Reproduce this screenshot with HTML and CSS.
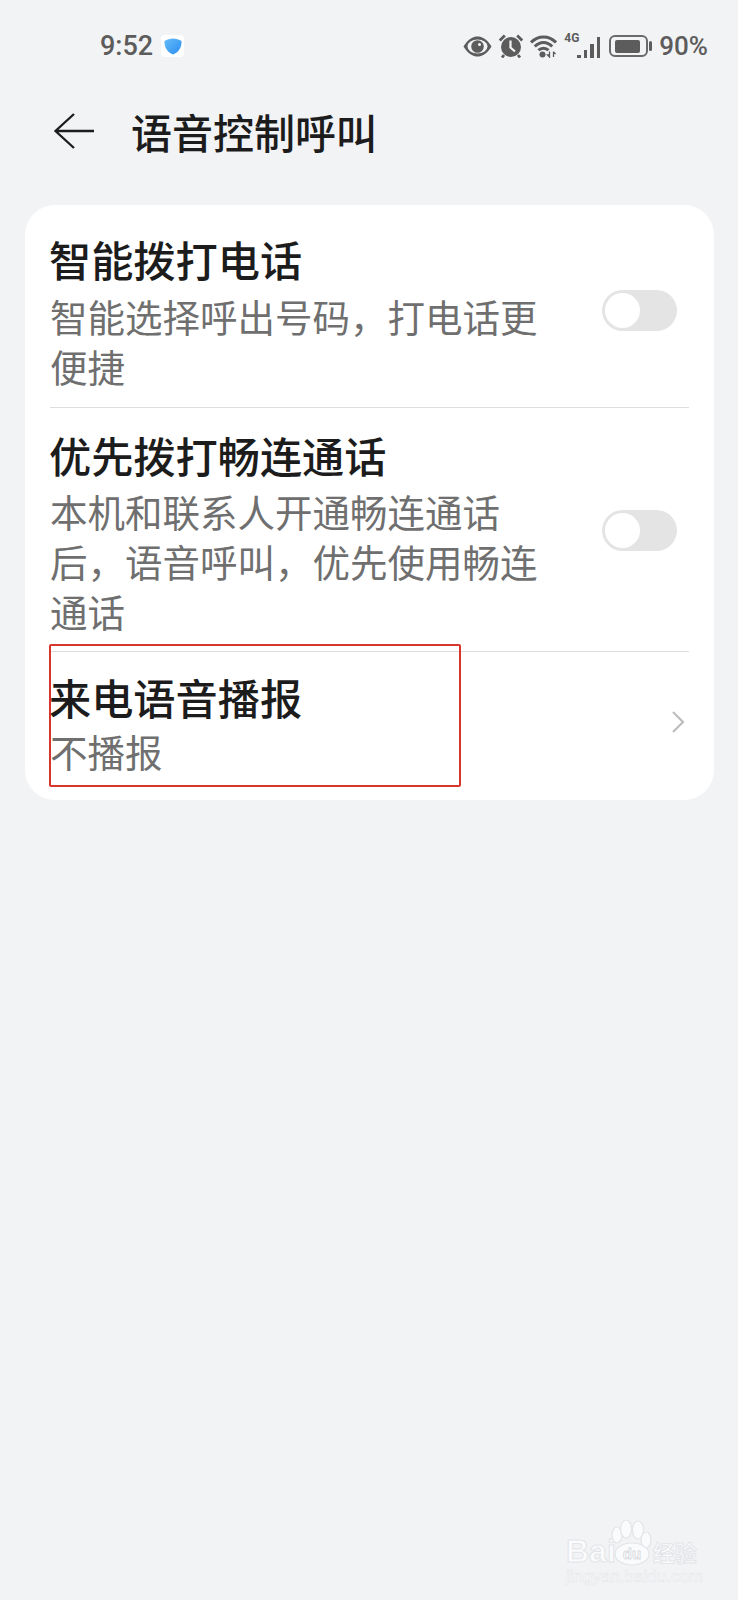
FILE: index.html
```html
<!DOCTYPE html>
<html lang="zh-CN">
<head>
<meta charset="UTF-8" />
<title>语音控制呼叫</title>
<link rel="stylesheet" href="styles.css">
</head>
<body>

<div class="statusbar">
	<div class="status-left">
		<span class="time">9:52</span>
		<span class="shieldbox">
			<svg width="18" height="17" viewBox="0 0 18 17"><defs><linearGradient id="sh" x1="0" y1="0" x2="1" y2="1"><stop offset="0" stop-color="#66bdf8"/><stop offset="1" stop-color="#2a8cf0"/></linearGradient></defs><path d="M9 0.500 C12 0.500 15 1.500 17.500 3 C18 9 14.500 14.500 9 16.500 C3.500 14.500 0 9 0.500 3 C3 1.500 6 0.500 9 0.500 Z" fill="url(#sh)"/></svg>
		</span>
	</div>
	<div class="status-right">
		<svg class="ico-eye" width="29" height="21" viewBox="0 0 29 21"><path d="M0.500 10.500 C5 3 10 0.500 14.500 0.500 C19 0.500 24 3 28.500 10.500 C24 18 19 20.500 14.500 20.500 C10 20.500 5 18 0.500 10.500 Z" fill="#5c5c5c"/><ellipse cx="14.500" cy="10.500" rx="10" ry="7" fill="#f2f3f5"/><circle cx="14.500" cy="10.500" r="6.300" fill="#5c5c5c"/><circle cx="16.500" cy="8.500" r="1.500" fill="#f2f3f5"/></svg>
		<svg class="ico-alarm" width="24" height="24" viewBox="0 0 24 24"><circle cx="12" cy="13" r="10" fill="#5c5c5c"/><path d="M11.500 6.500 V13.500 L16 17.500" fill="none" stroke="#f2f3f5" stroke-width="2.200"/><path d="M0.800 6.500 L5.800 1.500 M23.200 6.500 L18.200 1.500 M5 21 L3 23.500 M19 21 L21 23.500" stroke="#5c5c5c" stroke-width="2.800" fill="none"/></svg>
		<svg class="ico-wifi" width="27" height="24" viewBox="0 0 27 24"><path d="M1 8.500 C8 1 19 1 26 8.500 M4.800 12.500 C10 7 17 7 22.200 12.500 M8.500 16.300 C11 13.500 16 13.500 18.500 16.300" fill="none" stroke="#5c5c5c" stroke-width="3"/><circle cx="12.500" cy="20.500" r="3" fill="#5c5c5c"/><path d="M19.500 17.500 V23 L17.500 21 H19.500 M23.500 17.500 V23 M23.500 18 L25.500 20" fill="none" stroke="#5c5c5c" stroke-width="1.300"/></svg>
		<div class="signal">
			<span class="net">4G</span>
			<div class="bars">
				<i class="bar b1"></i><i class="bar b2"></i><i class="bar b3"></i><i class="bar b4"></i>
			</div>
		</div>
		<div class="battery">
			<div class="battery-body"><div class="battery-fill"></div></div>
			<div class="battery-tip"></div>
		</div>
		<span class="percent">90%</span>
	</div>
</div>

<div class="topbar">
	<svg class="back" width="42" height="38" viewBox="0 0 42 38"><path d="M21 2 L2.500 19 L21 36 M2.500 19 H41" fill="none" stroke="#1c1c1c" stroke-width="2.300"/></svg>
	<h1>语音控制呼叫</h1>
</div>

<div class="card">
	<div class="row row-first">
		<div class="row-text">
			<div class="row-title">智能拨打电话</div>
			<div class="row-sub">智能选择呼出号码，打电话更便捷</div>
		</div>
		<div class="toggle"><div class="knob"></div></div>
	</div>
	<div class="row">
		<div class="row-text">
			<div class="row-title">优先拨打畅连通话</div>
			<div class="row-sub">本机和联系人开通畅连通话后，语音呼叫，优先使用畅连通话</div>
		</div>
		<div class="toggle"><div class="knob"></div></div>
	</div>
	<div class="row row-last">
		<div class="row-text">
			<div class="row-title">来电语音播报</div>
			<div class="row-sub">不播报</div>
		</div>
		<svg class="chevron" width="14" height="24" viewBox="0 0 14 24"><path d="M2 2 L12 12 L2 22" fill="none" stroke="#bdbdbd" stroke-width="2.200"/></svg>
		<div class="redbox"></div>
	</div>
</div>

<div class="watermark">
	<div class="wm-top">
		<span class="wm-bai">Bai</span>
		<svg class="wm-paw" width="42" height="48" viewBox="0 0 42 48">
			<g fill="#fafbfc" stroke="#e3e5e8" stroke-width="1.200">
				<ellipse cx="7" cy="17" rx="5" ry="8"/>
				<ellipse cx="16" cy="11" rx="5.500" ry="9"/>
				<ellipse cx="28" cy="12" rx="5.500" ry="9"/>
				<ellipse cx="36" cy="22" rx="5" ry="8"/>
				<ellipse cx="22" cy="36" rx="17" ry="11"/>
			</g>
			<text x="22" y="41" text-anchor="middle" class="wm-du">du</text>
		</svg>
		<span class="wm-cn">经验</span>
	</div>
	<div class="wm-url">jingyan.baidu.com</div>
</div>

</body>
</html>
```

FILE: styles.css
```css
* {
	margin: 0;
	padding: 0;
	box-sizing: border-box;
}

body {
	width: 738px;
	height: 1600px;
	position: relative;
	overflow: hidden;
	background-color: #f2f3f5;
	font-family: "Noto Sans CJK SC", "Noto Sans", sans-serif;
}

/* status bar */
.statusbar {
	height: 92px;
	padding: 0 30px 0 100px;
	display: flex;
	align-items: center;
	justify-content: space-between;
	color: #5c5c5c;
	font-family: Roboto, "Liberation Sans", sans-serif;
	font-weight: 500;
	font-size: 27px;
}

.status-left {
	display: flex;
	align-items: center;
	gap: 8px;
}

.shieldbox {
	width: 23px;
	height: 22px;
	display: flex;
	align-items: center;
	justify-content: center;
	background-color: #fff;
	border-radius: 4px;
}

.status-right {
	display: flex;
	align-items: center;
	gap: 7px;
}

.signal {
	display: flex;
	align-items: flex-end;
	height: 24px;
	width: 37px;
	position: relative;
}

.net {
	font-size: 12px;
	font-weight: 700;
	line-height: 10px;
	position: absolute;
	left: 0;
	top: -1px;
}

.bars {
	margin-left: 13px;
	display: flex;
	align-items: flex-end;
	gap: 3px;
}

.bar {
	display: block;
	width: 3.500px;
	background-color: #5c5c5c;
}

.b1 { height: 3px; }
.b2 { height: 8px; }
.b3 { height: 14px; }
.b4 { height: 21px; }

.battery {
	display: flex;
	align-items: center;
	gap: 1px;
	margin-left: 1px;
}

.battery-body {
	width: 39px;
	height: 22px;
	padding: 2.500px 4px;
	border: 2px solid #6a6a6a;
	border-radius: 6px;
}

.battery-fill {
	width: 92%;
	height: 100%;
	background-color: #5c5c5c;
	border-radius: 2px;
}

.battery-tip {
	width: 3px;
	height: 10px;
	background-color: #5c5c5c;
	border-radius: 2px;
}

.percent {
	font-size: 26px;
}

/* header */
.topbar {
	height: 84px;
	padding-left: 53px;
	display: flex;
	align-items: center;
	gap: 36px;
}

.back {
	margin-bottom: 6px;
}

h1 {
	font-size: 41px;
	font-weight: 500;
	line-height: 50px;
	color: #1c1c1c;
	margin-bottom: 6px;
}

/* list card */
.card {
	margin: 29px 24px 0 25px;
	padding: 0 25px;
	background-color: #fff;
	border-radius: 30px;
}

.row {
	padding: 22px 0 15px;
	display: flex;
	align-items: center;
	justify-content: space-between;
	position: relative;
	border-bottom: 1px solid #dcdfe2;
}

.row-first {
	padding-top: 29px;
	padding-bottom: 16px;
}

.row-first .row-sub {
	margin-top: 7px;
}

.row-last {
	padding-top: 20px;
	padding-bottom: 24px;
	border-bottom: none;
}

.row-last .row-sub {
	margin-top: 4px;
}

.row-text {
	width: 491px;
	margin-left: -1px;
}

.row-title {
	font-size: 42.200px;
	font-weight: 500;
	line-height: 50px;
	color: #1c1c1c;
}

.row-sub {
	margin-top: 6px;
	margin-left: 1px;
	font-size: 37.500px;
	line-height: 50px;
	color: #6f6f6f;
}

.toggle {
	width: 75px;
	height: 41px;
	margin-right: 12px;
	margin-bottom: 5px;
	padding: 3px;
	background-color: #e4e4e4;
	border-radius: 21px;
}

.knob {
	width: 35px;
	height: 35px;
	background-color: #fff;
	border-radius: 50%;
}

.chevron {
	margin-right: 4px;
	margin-bottom: 4px;
}

/* annotation over the last row */
.redbox {
	position: absolute;
	left: -1px;
	top: -8px;
	width: 412px;
	height: 143px;
	border: 2px solid #d8352e;
	border-radius: 2px;
}

/* watermark */
.watermark {
	position: absolute;
	left: 566px;
	top: 1516px;
	width: 145px;
	color: #fafbfc;
	-webkit-text-stroke: 1px #e3e5e8;
}

.wm-top {
	display: flex;
	align-items: flex-end;
	height: 54px;
	position: relative;
}

.wm-bai {
	font-family: "Liberation Sans", sans-serif;
	font-size: 32px;
	font-weight: 700;
	line-height: 34px;
	margin-bottom: 2px;
}

.wm-paw {
	position: absolute;
	left: 44px;
	top: 2px;
}

.wm-du {
	font-family: "Liberation Sans", sans-serif;
	font-size: 15px;
	font-weight: 700;
	fill: #fafbfc;
	stroke: #d8dade;
	stroke-width: 0.800px;
}

.wm-cn {
	margin-left: 37px;
	font-size: 22px;
	line-height: 28px;
	font-weight: 700;
	margin-bottom: 5px;
}

.wm-url {
	font-family: "Liberation Sans", sans-serif;
	font-size: 17px;
	line-height: 22px;
	margin-top: -4px;
	-webkit-text-stroke: 0.500px #e3e5e8;
}
```
